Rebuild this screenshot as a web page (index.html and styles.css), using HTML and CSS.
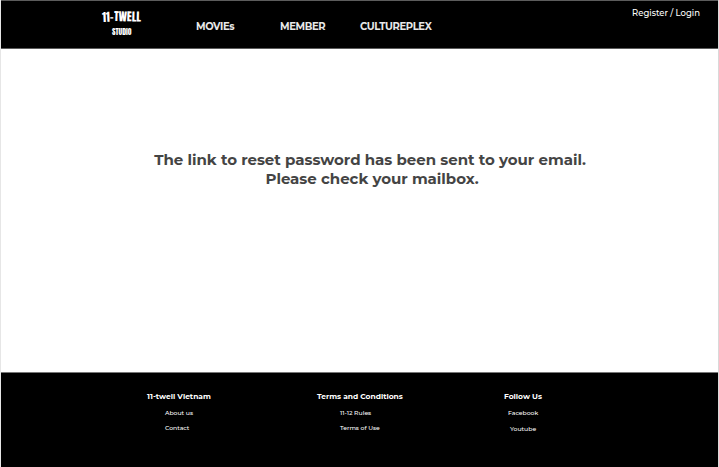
FILE: index.html
```html
<!DOCTYPE html>
<html lang="en">
<head>
<meta charset="utf-8">
<title>11-TWELL Studio</title>
<link rel="stylesheet" href="styles.css">
</head>
<body>
<div class="page">
  <header class="header">
    <svg class="logo" viewBox="0 0 42 30" role="img" aria-label="11-TWELL Studio">
      <g class="logo-name">
        <text x="1" y="13.7" textLength="11.5" lengthAdjust="spacingAndGlyphs" transform="rotate(-2 6 10)">11-</text>
        <text x="13" y="13.2" textLength="27" lengthAdjust="spacingAndGlyphs" transform="rotate(1.5 20 10)">TWELL</text>
      </g>
      <text class="logo-sub" x="11" y="26.5" textLength="19.5" lengthAdjust="spacingAndGlyphs">STUDIO</text>
    </svg>
    <nav class="nav">
      <a class="movies">MOVIEs</a>
      <a class="member">MEMBER</a>
      <a class="cultureplex">CULTUREPLEX</a>
    </nav>
    <a class="login">Register / Login</a>
  </header>
  <main class="message">
    <p class="sent">The link to reset password has been sent to your email.</p>
    <p class="check">Please check your mailbox.</p>
  </main>
  <footer class="footer">
    <section class="column about">
      <h2>11-twell Vietnam</h2>
      <a>About us</a>
      <a>Contact</a>
    </section>
    <section class="column terms">
      <h2>Terms and Conditions</h2>
      <a>11-12 Rules</a>
      <a>Terms of Use</a>
    </section>
    <section class="column follow">
      <h2>Follow Us</h2>
      <a>Facebook</a>
      <a class="youtube">Youtube</a>
    </section>
  </footer>
</div>
</body>
</html>
```
FILE: styles.css
```css
* { box-sizing: border-box; }
body {
  margin: 0;
  background: #fff;
  font-family: Montserrat, Inter, sans-serif;
}
.page {
  height: 467px;
  display: flex;
  flex-direction: column;
  border-left: 1px solid #e6e6e6;
  border-right: 1px solid #d9d9d9;
  overflow: hidden;
}
.header {
  height: 49px;
  margin: 0 -1px;
  display: flex;
  align-items: flex-start;
  background: #000;
  border: 1px solid #5c5c5c;
  color: #fff;
}
.logo {
  width: 42px;
  height: 30px;
  margin: 7px 0 0 100px;
  overflow: visible;
  fill: #fff;
  font-family: Anton, "Bebas Neue", Oswald, "Liberation Sans", sans-serif;
  font-weight: 400;
}
.logo-name { font-size: 11.6px; }
.logo-sub { font-size: 7.6px; }
.nav {
  display: flex;
  margin: 20px 0 0 53px;
  font-size: 10px;
  line-height: 12px;
  font-weight: 700;
  letter-spacing: -0.36px;
  color: #e8e8e8;
}
.nav a { white-space: nowrap; }
.movies { width: 84px; }
.member { width: 80px; }
.login {
  margin: 6px 18px 0 auto;
  font-size: 8.5px;
  line-height: 12px;
  font-weight: 500;
  color: #fff;
}
.message {
  height: 323px;
  padding-top: 101px;
  text-align: center;
  font-size: 15px;
  line-height: 19px;
  font-weight: 700;
  letter-spacing: -0.02px;
  color: #444;
}
.message p { margin: 0; white-space: nowrap; }
.sent { padding-left: 21px; }
.check { padding-left: 25px; }
.footer {
  height: 95px;
  margin: 0 -1px;
  padding: 19px 0 0 146px;
  display: flex;
  background: #000;
  border: 1px solid #777;
  border-bottom: 0;
  color: #fff;
}
.column {
  display: flex;
  flex-direction: column;
  font-size: 6.1px;
  line-height: 10px;
  font-weight: 500;
  white-space: nowrap;
}
.column h2 {
  margin: 0 0 6px;
  font-size: 7.5px;
  line-height: 10px;
  font-weight: 700;
}
.column a { margin-bottom: 5px; }
.about { width: 170px; }
.about a { padding-left: 18px; }
.terms { width: 187px; }
.terms a { padding-left: 23px; }
.follow a { padding-left: 4px; }
.follow .youtube { padding: 1px 0 0 6px; }
```
